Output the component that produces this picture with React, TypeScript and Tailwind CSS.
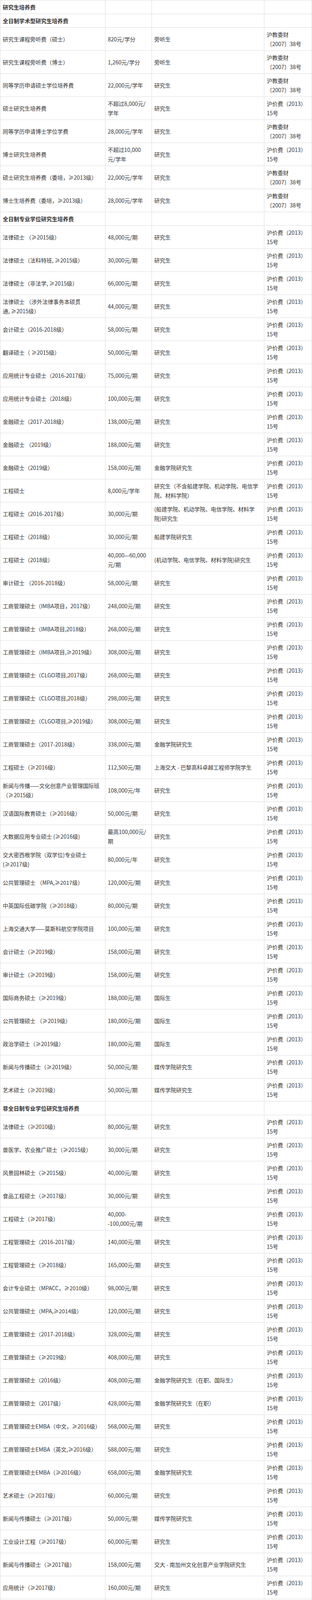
import React from 'react';

type Row = { head: string } | { cells: [string, string, string, string] };

const J = '沪教委财\n〔2007〕38号';
const P = '沪价费（2013）\n15号';
const Y = '研究生';

const r = (a: string, b: string, c: string = Y, d: string = P): Row => ({ cells: [a, b, c, d] });
const h = (t: string): Row => ({ head: t });

// line breaks are written out where the reference wraps, cells never wrap on their own
const ROWS: Row[] = [
  h('研究生培养费'),
  h('全日制学术型研究生培养费'),
  r('研究生课程旁听费（硕士）', '820元/学分', '旁听生', J),
  r('研究生课程旁听费（博士）', '1,260元/学分', '旁听生', J),
  r('同等学历申请硕士学位培养费', '22,000元/学年', Y, J),
  r('硕士研究生培养费', '不超过8,000元/\n学年'),
  r('同等学历申请博士学位学费', '28,000元/学年', Y, J),
  r('博士研究生培养费', '不超过10,000\n元/学年'),
  r('硕士研究生培养费（委培，≥2013级）', '22,000元/学年', Y, J),
  r('博士生培养费（委培，≥2013级）', '28,000元/学年', Y, J),
  h('全日制专业学位研究生培养费'),
  r('法律硕士 （≥2015级）', '48,000元/期'),
  r('法律硕士（法科特班, ≥2015级）', '30,000元/期'),
  r('法律硕士（非法学, ≥2015级）', '66,000元/期'),
  r('法律硕士 （涉外法律事务本硕贯\n通, ≥2015级）', '44,000元/期'),
  r('会计硕士（2016-2018级）', '58,000元/期'),
  r('翻译硕士（ ≥2015级）', '50,000元/期'),
  r('应用统计专业硕士（2016-2017级）', '75,000元/期'),
  r('应用统计专业硕士（2018级）', '100,000元/期'),
  r('金融硕士（2017-2018级）', '138,000元/期'),
  r('金融硕士 （2019级）', '188,000元/期'),
  r('金融硕士（2019级）', '158,000元/期', '金融学院研究生'),
  r('工程硕士', '8,000元/学年', '研究生（不含船建学院、机动学院、电信学\n院、材料学院）'),
  r('工程硕士（2016-2017级）', '30,000元/期', '(船建学院、机动学院、电信学院、材料学\n院)研究生'),
  r('工程硕士（2018级）', '30,000元/期', '船建学院研究生'),
  r('工程硕士（2018级）', '40,000—60,000\n元/期', '(机动学院、电信学院、材料学院)研究生'),
  r('审计硕士 （2016-2018级）', '58,000元/期'),
  r('工商管理硕士（IMBA项目，2017级）', '248,000元/期'),
  r('工商管理硕士（IMBA项目,2018级）', '268,000元/期'),
  r('工商管理硕士（IMBA项目,≥2019级）', '308,000元/期'),
  r('工商管理硕士（CLGO项目,2017级）', '268,000元/期'),
  r('工商管理硕士（CLGO项目,2018级）', '298,000元/期'),
  r('工商管理硕士（CLGO项目,≥2019级）', '308,000元/期'),
  r('工商管理硕士（2017-2018级）', '338,000元/期', '金融学院研究生'),
  r('工程硕士（≥2016级）', '112,500元/期', '上海交大 - 巴黎高科卓越工程师学院学生'),
  r('新闻与传播——文化创意产业管理国际班\n（≥2015级）', '108,000元/年'),
  r('汉语国际教育硕士（≥2016级）', '50,000元/期'),
  r('大数据应用专业硕士 (≥2016级)', '最高100,000元/\n期'),
  r('交大密西根学院（双学位)专业硕士\n(≥2017级)', '80,000元/年'),
  r('公共管理硕士 （MPA,≥2017级）', '120,000元/期'),
  r('中英国际低碳学院（≥2018级）', '80,000元/期'),
  r('上海交通大学——莫斯科航空学院项目', '100,000元/期'),
  r('会计硕士（≥2019级）', '158,000元/期'),
  r('审计硕士（≥2019级）', '158,000元/期'),
  r('国际商务硕士（≥2019级）', '188,000元/期', '国际生'),
  r('公共管理硕士 （≥2019级）', '180,000元/期', '国际生'),
  r('政治学硕士（≥2019级）', '180,000元/期', '国际生'),
  r('新闻与传播硕士（≥2019级）', '50,000元/期', '媒传学院研究生'),
  r('艺术硕士（≥2019级）', '50,000元/期', '媒传学院研究生'),
  h('非全日制专业学位研究生培养费'),
  r('法律硕士（≥2010级）', '80,000元/期'),
  r('兽医学、农业推广硕士（≥2015级）', '30,000元/期'),
  r('风景园林硕士（≥2015级）', '40,000元/期'),
  r('食品工程硕士（≥2017级）', '30,000元/期'),
  r('工程硕士（≥2017级）', '40,000-\n-100,000元/期'),
  r('工程管理硕士（2016-2017级）', '140,000元/期'),
  r('工程管理硕士（≥2018级）', '165,000元/期'),
  r('会计专业硕士（MPACC，≥2010级）', '98,000元/期'),
  r('公共管理硕士（MPA,≥2014级）', '120,000元/期'),
  r('工商管理硕士（2017-2018级）', '328,000元/期'),
  r('工商管理硕士（≥2019级）', '408,000元/期'),
  r('工商管理硕士（2016级）', '408,000元/期', '金融学院研究生（在职、国际生）'),
  r('工商管理硕士（2017级）', '428,000元/期', '金融学院研究生（在职）'),
  r('工商管理硕士EMBA（中文，≥2016级）', '568,000元/期'),
  r('工商管理硕士EMBA（英文,≥2016级）', '588,000元/期'),
  r('工商管理硕士EMBA（≥2016级）', '658,000元/期', '金融学院研究生'),
  r('艺术硕士（≥2017级）', '60,000元/期'),
  r('新闻与传播硕士（≥2017级）', '50,000元/期', '媒传学院研究生'),
  r('工业设计工程（≥2017级）', '60,000元/期'),
  r('新闻与传播硕士（≥2017级）', '158,000元/期', '交大 - 南加州文化创意产业学院研究生'),
  r('应用统计（≥2017级）', '160,000元/期'),
  r('应用心理（≥2017级）', '75,000元/期'),
  r('翻译硕士（≥2017级）', '150,000元/期'),
  r('工商管理硕士EMBA（金融新睿方向，\n≥2017级）', '428,000元/期', '金融学院研究生'),
  r('工商管理硕士EMBA （≥2019级）', '618,000元/期'),
  r('工程博士（≥2012级）', '200,000元/期'),
  h('国际合作联合培养研究生'),
  r('工商管理硕士（加拿大班IMBA,2016\n级）', '305,000元/期'),
  r('工商管理硕士（加拿大班IMBA,≥2017\n级）', '400,000元/期'),
  r('工商管理硕士EMBA（新加坡南洋理\n工,2016级）', '460,000元/期'),
  r('工商管理硕士EMBA（新加坡南洋理\n工,≥2017级）', '568,000元/期'),
  r('工商管理硕士EMBA（新加坡南洋理\n工,≥2019级）', '618,000元/期'),
  r('交大 - 美国南加州工商管理硕士（EMBA)\n\u00a0', '570,000元/期'),
  r('数量金融硕士（新加坡国立大学）', '220,000元/期'),
  r('交大 - 曼彻斯特管理学博士学位', '514,000元/期'),
  r('交大 - 马赛工商管理硕士（MBA）', '288,000元/期'),
  r('交大 - 马赛工商管理硕士（MBA,≥2018\n级）', '358,000元/期'),
];

const cell =
  "border border-[#dddddd] px-[6px] py-[5px] align-middle text-left whitespace-pre text-[14px] leading-[24px] text-[#333333] font-['Noto_Sans_CJK_SC',sans-serif]";

export default function App() {
  return (
    <div className="bg-white">
      <table className="w-[799px] table-fixed border-collapse">
        <colgroup>
          <col className="w-[269px]" />
          <col className="w-[119px]" />
          <col className="w-[288px]" />
          <col className="w-[122px]" />
        </colgroup>
        <tbody>
          {ROWS.map((row, i) =>
            'head' in row ? (
              <tr key={i} className="h-[35px]">
                <td className={`${cell} font-bold text-[#222222]`}>{row.head}</td>
                <td className={cell}></td>
                <td className={cell}></td>
                <td className={cell}></td>
              </tr>
            ) : (
              <tr key={i} className="h-[59px]">
                {row.cells.map((c, j) => (
                  <td key={j} className={cell}>{c}</td>
                ))}
              </tr>
            )
          )}
        </tbody>
      </table>
    </div>
  );
}
